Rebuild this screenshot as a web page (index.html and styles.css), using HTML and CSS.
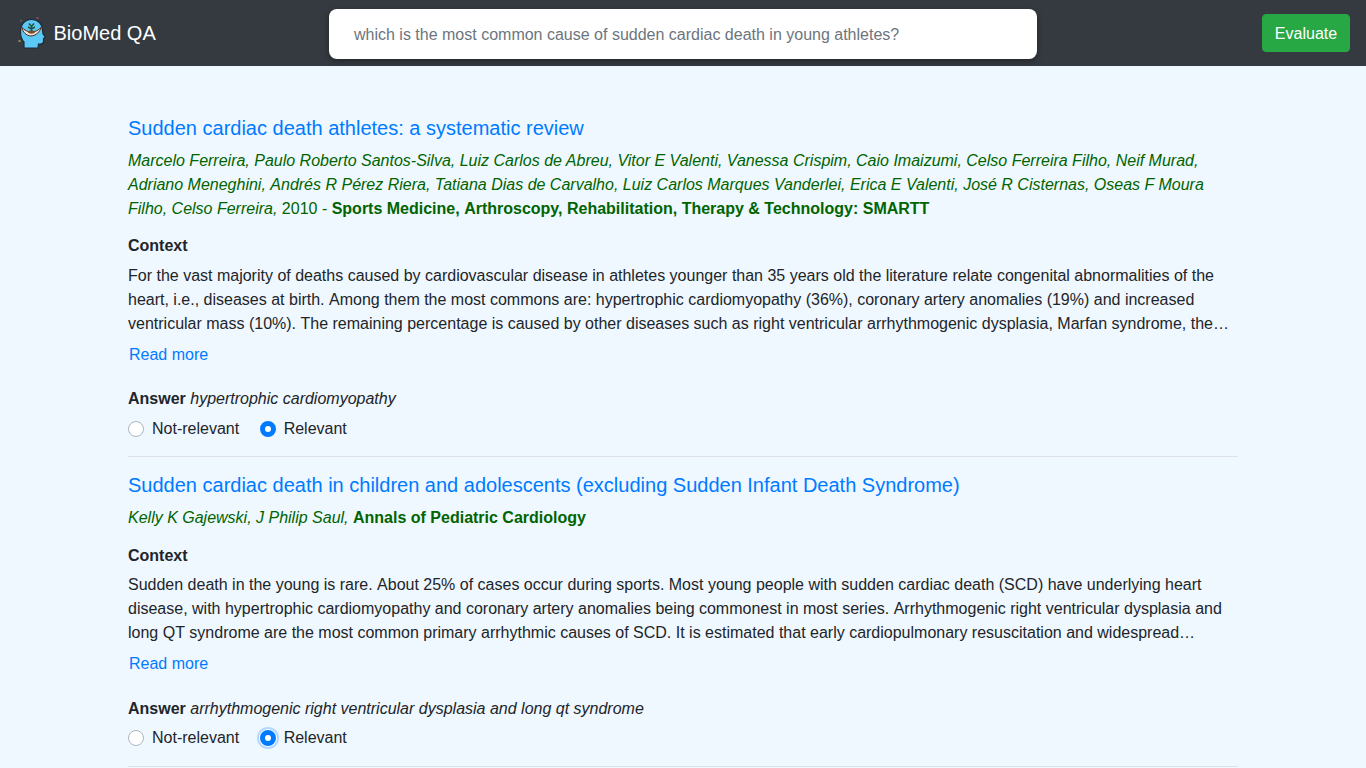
FILE: index.html
```html
<!DOCTYPE html>
<html lang="en">
<head>
<meta charset="utf-8">
<title>BioMed QA</title>
<link rel="stylesheet" href="styles.css">
</head>
<body>
<nav class="navbar">
  <a class="brand" href="#">
    <svg class="logo" viewBox="0 0 30 34" width="30" height="34" aria-hidden="true">
      <path d="M7 32 L7 26 C4.500 23.500 3.500 20 3.500 15.500 C3.500 8 8.500 3.500 14.500 3.500 C21 3.500 25.500 8 25.500 14 L26 18 L28.500 21 L26.500 22.500 L26.500 26 C26 28 24 28.500 21.500 28 L21 32 Z" fill="#5cc8f5" stroke="#1d2a38" stroke-width="1.200"/>
      <path d="M5 11.500 C5.500 16 9 19.500 14 20 C19 19.500 23 16 24 11.500 C22 13.500 20 15 17.500 15.500 L14.500 16.500 L11.500 15.500 C9 15 7 13.500 5 11.500 Z" fill="#f3e3d3" stroke="#4a2a20" stroke-width="1"/>
      <path d="M10.500 15.500 C12.500 14 16.500 14 18.500 15.500 C17.500 18.500 11.500 18.500 10.500 15.500 Z" fill="#7a4a32"/>
      <path d="M14.500 15 V9 M14.500 13 L11 11 M14.500 13 L18 11 M14.500 10.500 L12 7.500 M14.500 10.500 L17 7.500" stroke="#24553f" stroke-width="1.500" fill="none"/>
      <rect x="1.500" y="24" width="2" height="2" fill="#a08a4a"/>
      <rect x="19.500" y="1" width="2" height="2" fill="#8a4a5a"/>
      <rect x="3.500" y="4" width="1.500" height="1.500" fill="#5a7a4a"/>
    </svg>
    <span class="brand-name">BioMed QA</span>
  </a>
  <div class="search">which is the most common cause of sudden cardiac death in young athletes?</div>
  <button class="evaluate" type="button">Evaluate</button>
</nav>
<main class="results">
  <article class="result">
    <a class="title" href="#">Sudden cardiac death athletes: a systematic review</a>
    <p class="meta"><em>Marcelo Ferreira<span class="sep">, </span>Paulo Roberto Santos-Silva<span class="sep">, </span>Luiz Carlos de Abreu<span class="sep">, </span>Vitor E<span class="sep"> </span>Valenti<span class="sep">, </span>Vanessa Crispim<span class="sep">, </span>Caio Imaizumi<span class="sep">, </span>Celso Ferreira Filho<span class="sep">, </span>Neif Murad<span class="sep">, </span>Adriano Meneghini<span class="sep">, </span>Andrés R Pérez Riera<span class="sep">, </span>Tatiana Dias de Carvalho<span class="sep">, </span>Luiz Carlos Marques Vanderlei<span class="sep">, </span>Erica E<span class="sep"> </span>Valenti<span class="sep">, </span>José R Cisternas<span class="sep">, </span>Oseas F Moura Filho<span class="sep">, </span>Celso Ferreira,</em> 2010 - <strong>Sports Medicine,<span class="sep"> </span>Arthroscopy, Rehabilitation,<span class="sep"> </span>Therapy &amp;<span class="sep"> </span>Technology: SMARTT</strong></p>
    <h2 class="label">Context</h2>
    <p class="context">For the vast majority of deaths caused by cardiovascular disease in athletes younger than 35 years old the literature relate congenital abnormalities of the heart, i.e., diseases at birth. Among them the most commons are: hypertrophic cardiomyopathy (36%), coronary artery anomalies (19%) and increased ventricular mass (10%). The remaining percentage is caused by other diseases such as right ventricular arrhythmogenic dysplasia, Marfan syndrome, the…</p>
    <a class="more" href="#">Read more</a>
    <p class="answer"><strong>Answer</strong> <em>hypertrophic cardiomyopathy</em></p>
    <div class="choices">
      <label class="choice"><input type="radio" name="r1"><span>Not-relevant</span></label>
      <label class="choice"><input type="radio" name="r1" checked><span>Relevant</span></label>
    </div>
  </article>
  <article class="result">
    <a class="title" href="#">Sudden cardiac death in children and adolescents (excluding Sudden Infant Death Syndrome)</a>
    <p class="meta"><em>Kelly K Gajewski<span class="sep">, </span>J Philip Saul,</em> <strong>Annals of Pediatric Cardiology</strong></p>
    <h2 class="label">Context</h2>
    <p class="context">Sudden death in the young is rare. About 25% of cases occur during sports. Most young people with sudden cardiac death (SCD) have underlying heart disease, with hypertrophic cardiomyopathy and coronary artery anomalies being commonest in most series. Arrhythmogenic right ventricular dysplasia and long QT syndrome are the most common primary arrhythmic causes of SCD. It is estimated that early cardiopulmonary resuscitation and widespread…</p>
    <a class="more" href="#">Read more</a>
    <p class="answer"><strong>Answer</strong> <em>arrhythmogenic right ventricular dysplasia and long qt syndrome</em></p>
    <div class="choices">
      <label class="choice"><input type="radio" name="r2"><span>Not-relevant</span></label>
      <label class="choice"><input class="focused" type="radio" name="r2" checked><span>Relevant</span></label>
    </div>
  </article>
</main>
</body>
</html>
```
FILE: styles.css
```css
* { box-sizing: border-box; }
html, body { margin: 0; height: 768px; overflow: hidden; }
body {
  background: #eff7ff;
  color: #212529;
  font-family: "Liberation Sans", Arial, sans-serif;
  font-size: 16px;
  line-height: 24px;
}
.navbar {
  height: 66px;
  background: #343a40;
  display: flex;
  align-items: center;
  padding: 0 16px;
}
.brand {
  display: flex;
  align-items: center;
  gap: 6.500px;
  width: 313px;
  color: #fff;
  text-decoration: none;
  font-size: 20px;
}
.logo { flex: none; margin-left: 1px; }
.search {
  width: 708px;
  height: 50px;
  margin-top: 2px;
  padding: 14px 25px;
  background: #fff;
  border-radius: 8px;
  box-shadow: 0 2px 6px rgba(0, 0, 0, .35);
  color: #6c757d;
}
.evaluate {
  margin-left: auto;
  height: 38px;
  width: 88px;
  padding: 2px 0 0;
  background: #28a745;
  border: 1px solid #28a745;
  border-radius: 4px;
  color: #fff;
  font: inherit;
}
.results { width: 1110px; margin: 50px 0 0 128px; }
.result { padding-bottom: 15.300px; border-bottom: 1px solid #dee2e6; margin-bottom: 16px; }
.title { display: block; color: #007bff; text-decoration: none; font-size: 20px; line-height: 24px; }
.meta { margin: 9px 0 0; color: #006400; }
.sep { font-kerning: none; }
.label { margin: 13.400px 0 0; font-size: 16px; font-weight: 700; line-height: 24px; }
.context { margin: 5.600px 0 0; font-kerning: none; }
.more { display: block; margin: 7px 0 0 1px; color: #007bff; text-decoration: none; }
.answer { margin: 20.400px 0 0; }
.choices { display: flex; gap: 20.500px; margin-top: 5.600px; }
.choice { display: flex; align-items: center; gap: 8px; }
.choice input { appearance: none; width: 16px; height: 16px; margin: 0; border: 1px solid #adb5bd; border-radius: 50%; background: #fff; }
.choice input:checked { border: 5px solid #007bff; }
.choice input.focused:checked { box-shadow: 0 0 0 1px #fff, 0 0 0 3px rgba(0, 123, 255, .25); }
```
